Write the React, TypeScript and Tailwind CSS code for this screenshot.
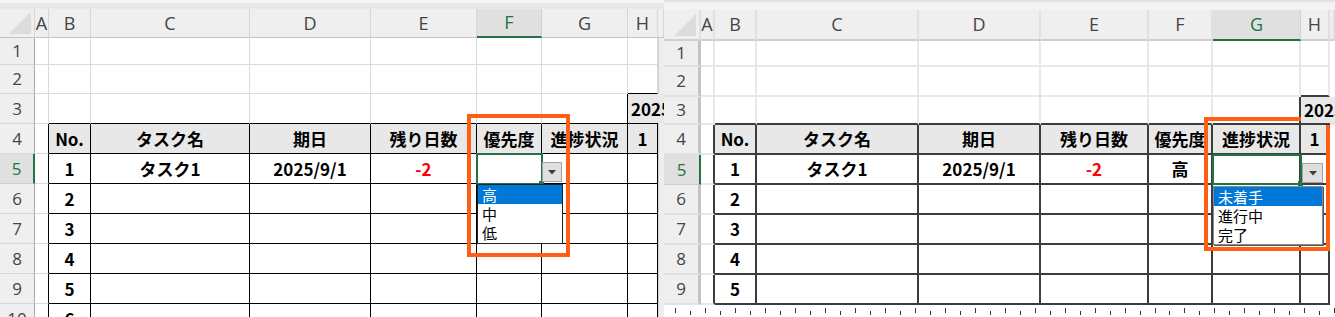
import React from 'react'

type Cell = { text: string; red?: boolean; left?: boolean }

const cols = ['A', 'B', 'C', 'D', 'E', 'F', 'G', 'H', '']

const headerRow = ['No.', 'タスク名', '期日', '残り日数', '優先度', '進捗状況', '1']

function buildCells(priority: string, rows: number) {
  const cells: Record<string, Cell> = {}
  cells['3-8'] = { text: '2025', left: true }
  headerRow.forEach((t, i) => {
    cells[`4-${i + 2}`] = { text: t }
  })
  cells['5-2'] = { text: '1' }
  cells['5-3'] = { text: 'タスク1' }
  cells['5-4'] = { text: '2025/9/1' }
  cells['5-5'] = { text: '-2', red: true }
  if (priority) cells['5-6'] = { text: priority }
  for (let r = 6; r <= rows; r++) cells[`${r}-2`] = { text: String(r - 4) }
  return cells
}

const isTable = (r: number, c: number) => (r >= 4 && c >= 2 && c <= 8) || (r === 3 && c === 8)
const isShaded = (r: number, c: number) => (r === 4 && c >= 2 && c <= 8) || (r === 3 && c >= 8)

const variants = {
  a: {
    rOn: 'border-r border-r-black',
    rOff: 'border-r border-r-[#dadada]',
    bOn: 'border-b border-b-black',
    bOff: 'border-b border-b-[#dadada]',
    hdrSep: 'border-r border-r-[#d6d6d6] border-b border-b-[#c4c4c4]',
    rowSep: 'border-b border-b-[#d6d6d6] border-r border-r-[#acacac]',
    lastCol: 'bg-[#eeeeee] border-l border-l-[#d0d0d0]',
  },
  b: {
    rOn: 'border-r-2 border-r-[#3d3d3d]',
    rOff: 'border-r-2 border-r-[#e8e8e8]',
    bOn: 'border-b-2 border-b-[#3d3d3d]',
    bOff: 'border-b-2 border-b-[#e8e8e8]',
    hdrSep: 'border-r-2 border-r-[#e0e0e0] border-b-2 border-b-[#cfcfcf]',
    rowSep: 'border-b-2 border-b-[#e2e2e2] border-r-[3px] border-r-[#c4c4c4]',
    lastCol: 'bg-white',
  },
}

interface SheetProps {
  variant: 'a' | 'b'
  rows: number
  selCol: number
  selRow: number
  gridClass: string
  cells: Record<string, Cell>
}

function Sheet({ variant, rows, selCol, selRow, gridClass, cells }: SheetProps) {
  const v = variants[variant]
  const out: React.ReactNode[] = []

  // header row
  out.push(
    <div key="corner" className={`relative bg-[#efefef] ${v.hdrSep}`}>
      <div className="absolute right-[3px] bottom-[3px] w-[22px] h-[22px] bg-[#dcdcdc] [clip-path:polygon(100%_0,100%_100%,0_100%)]" />
    </div>
  )
  cols.forEach((label, i) => {
    const c = i + 1
    const sel = c === selCol
    out.push(
      <div
        key={`h-${c}`}
        className={`flex items-center justify-center overflow-hidden text-[18px] font-['Open_Sans',sans-serif] ${
          sel
            ? 'bg-[#e0e0e0] text-[#217346] border-r border-r-[#d0d0d0] border-b-2 border-b-[#217346]'
            : `bg-[#efefef] text-[#444444] ${v.hdrSep}`
        }`}
      >
        {label}
      </div>
    )
  })

  for (let r = 1; r <= rows; r++) {
    const selR = r === selRow
    out.push(
      <div
        key={`r-${r}`}
        className={`flex items-center justify-center text-[17px] font-['Open_Sans',sans-serif] ${
          selR
            ? 'bg-[#e0e0e0] text-[#217346] border-b border-b-[#d0d0d0] border-r-2 border-r-[#217346]'
            : `bg-[#efefef] text-[#444444] ${v.rowSep}`
        }`}
      >
        {r}
      </div>
    )
    for (let c = 1; c <= 9; c++) {
      if (c === 9) {
        out.push(<div key={`${r}-${c}`} className={isShaded(r, c) ? 'bg-[#e8e8e8]' : v.lastCol} />)
        continue
      }
      const cell = cells[`${r}-${c}`]
      const right = isTable(r, c) || isTable(r, c + 1)
      const bottom = isTable(r, c) || isTable(r + 1, c)
      out.push(
        <div
          key={`${r}-${c}`}
          className={`flex items-center whitespace-nowrap font-bold text-[17px] font-['Noto_Sans_CJK_JP',sans-serif] ${
            cell?.left ? 'justify-start pl-[3px] overflow-visible z-10' : 'justify-center overflow-hidden'
          } ${cell?.red ? 'text-[#ff0000]' : 'text-black'} ${isShaded(r, c) ? 'bg-[#e8e8e8]' : 'bg-white'} ${
            right && !cell?.left ? v.rOn : cell?.left ? 'border-r-0' : v.rOff
          } ${bottom ? v.bOn : v.bOff}`}
        >
          {cell?.text}
        </div>
      )
    }
  }

  return <div className={`grid ${gridClass}`}>{out}</div>
}

function Arrow({ className }: { className: string }) {
  return (
    <div className={`absolute flex items-center justify-center bg-[#dfdfdf] border border-[#a3a3a3] ${className}`}>
      <svg width="8" height="5" viewBox="0 0 8 5" className="mt-[1px]">
        <path d="M0 0 H8 L4 4.5 Z" fill="#404040" />
      </svg>
    </div>
  )
}

function DropList({ items, className }: { items: string[]; className: string }) {
  return (
    <div className={`absolute bg-white font-['Noto_Sans_CJK_JP',sans-serif] text-[15px] ${className}`}>
      {items.map((t, i) => (
        <div
          key={t}
          className={`h-[19px] leading-[19px] pl-[4px] ${i === 0 ? 'bg-[#0078d7] text-white' : 'text-black'}`}
        >
          {t}
        </div>
      ))}
    </div>
  )
}

function Ticks() {
  return (
    <div className="flex h-[12px] items-start gap-[14px] pl-[11px] bg-white">
      {Array.from({ length: 45 }).map((_, i) => (
        <div key={i} className={`w-px bg-[#333333] ${i % 2 === 0 ? 'h-[5px] mt-[3px]' : 'h-[4px] mt-[6px]'}`} />
      ))}
    </div>
  )
}

export default function App() {
  return (
    <div className="flex w-[1335px] h-[317px] overflow-hidden bg-white">
      {/* left screenshot */}
      <div className="relative w-[664px] h-[317px] overflow-hidden shrink-0">
        <div className="h-[9px] bg-[#e6e8eb] border-t-[3px] border-t-[#f4f5f6]" />
        <Sheet
          variant="a"
          rows={10}
          selCol={6}
          selRow={5}
          cells={buildCells('', 10)}
          gridClass="grid-cols-[35px_14px_42px_159px_121px_106px_65px_86px_30px_6px] grid-rows-[29px_27px_29px_30px_30px_30px_30px_30px_30px_30px_30px]"
        />
        <div className="absolute left-[476px] top-[153px] w-[67px] h-[32px] border-2 border-[#217346]" />
        <div className="absolute left-[539px] top-[181px] w-[5px] h-[5px] bg-[#217346]" />
        <Arrow className="left-[542px] top-[162px] w-[20px] h-[20px]" />
        <DropList items={['高', '中', '低']} className="left-[477px] top-[184px] w-[86px] border border-[#222222] pb-[1px]" />
        <div className="absolute left-[467px] top-[114px] w-[103px] h-[143px] border-4 border-[#ff5f14]" />
      </div>

      {/* right screenshot */}
      <div className="relative w-[671px] h-[317px] overflow-hidden shrink-0">
        <div className="h-[10px] bg-[#f3f3f3] border-t-2 border-t-[#e2e2e2]" />
        <Sheet
          variant="b"
          rows={9}
          selCol={7}
          selRow={5}
          cells={buildCells('高', 9)}
          gridClass="grid-cols-[37px_14px_42px_162px_122px_108px_64px_88px_29px_5px] grid-rows-[31px_26px_30px_28px_30px_30px_30px_30px_30px_30px]"
        />
        <Ticks />
        <div className="absolute left-[548px] top-[154px] w-[90px] h-[31px] border-2 border-[#217346]" />
        <div className="absolute left-[634px] top-[181px] w-[5px] h-[5px] bg-[#217346]" />
        <Arrow className="left-[638px] top-[163px] w-[21px] h-[20px]" />
        <DropList
          items={['未着手', '進行中', '完了']}
          className="left-[549px] top-[186px] w-[110px] border border-[#8a8a8a] shadow-[1px_1px_0_#555555]"
        />
        <div className="absolute left-[540px] top-[117px] w-[126px] h-[134px] border-4 border-[#ff5f14]" />
      </div>
    </div>
  )
}
